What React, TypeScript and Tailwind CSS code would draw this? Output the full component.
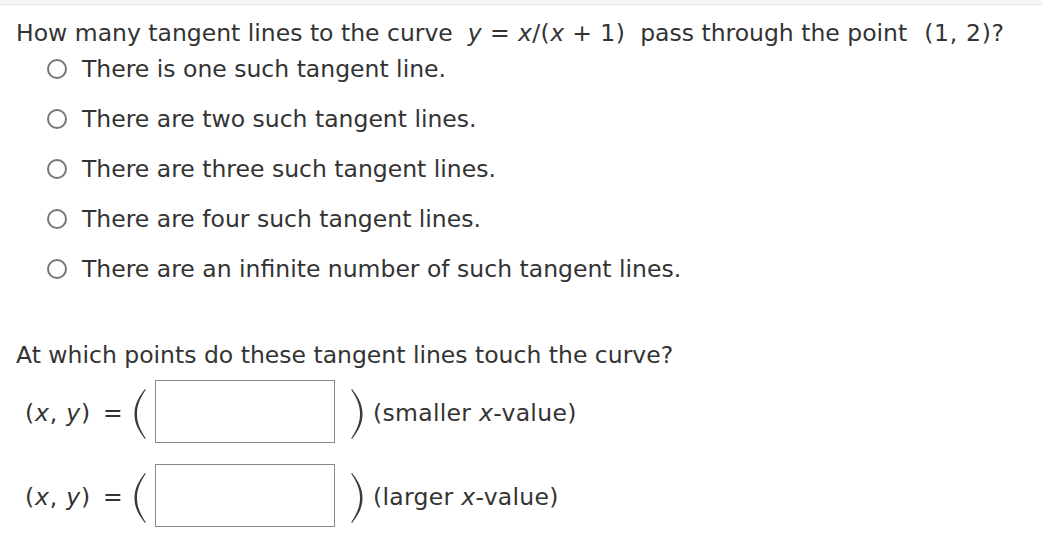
import React from "react";

const Radio = () => (
  <span className="inline-block w-[20px] h-[20px] rounded-full border-2 border-[#767676] bg-white shrink-0" />
);

// tall stretched parenthesis, as drawn by the math renderer
const Paren = ({ right }: { right?: boolean }) => (
  <svg width="12" height="52" viewBox="0 0 12 52" className="shrink-0 mt-[4px]">
    <path
      transform={right ? "translate(12 0) scale(-1 1)" : undefined}
      d="M11 1 C4 10 0.5 17 0.5 26 C0.5 35 4 42 11 51 L11.8 50.4 C5.6 41 3 34 3 26 C3 18 5.6 11 11.8 1.6 Z"
      fill="#3a3a3a"
    />
  </svg>
);

const options = [
  "There is one such tangent line.",
  "There are two such tangent lines.",
  "There are three such tangent lines.",
  "There are four such tangent lines.",
  "There are an infinite number of such tangent lines.",
];

const PointRow = ({ which }: { which: string }) => (
  <div className="flex items-center h-[63px] pl-[25px]">
    <span className="w-[78px] pt-[4px] whitespace-nowrap tracking-[0.8px]">
      (<i>x</i>, <i>y</i>)
    </span>
    <span className="w-[31px] pt-[4px]">=</span>
    <Paren />
    <span className="ml-[9px] w-[180px] h-[63px] border border-[#888] bg-white shrink-0" />
    <span className="ml-[16px] flex">
      <Paren right />
    </span>
    <span className="ml-[10px] pt-[4px] whitespace-nowrap tracking-[0.3px]">
      ({which} <i>x</i>-value)
    </span>
  </div>
);

export default function App() {
  return (
    <div className="w-[1042px] h-[553px] bg-white text-[#333] text-[23.5px] font-['DejaVu_Sans',Verdana,sans-serif] overflow-hidden">
      <div className="h-[5px] bg-[#f6f6f6] border-b border-[#e2e2e2]" />
      <div className="pl-[16px] pt-[14px] leading-[28px] whitespace-nowrap">
        How many tangent lines to the curve&nbsp;{" "}
        <span className="tracking-[0.4px]">
          <i>y</i> = <i>x</i>/(<i>x</i> + 1)
        </span>
        &nbsp; pass through the point&nbsp;{" "}
        <span className="tracking-[0.7px] ml-[2px]">(1, 2)</span>?
      </div>
      <div className="-mt-[3px]">
        {options.map((o) => (
          <div key={o} className="flex items-center h-[50px] pl-[47px] gap-[15px]">
            <Radio />
            <span className="leading-[28px] whitespace-nowrap">{o}</span>
          </div>
        ))}
      </div>
      <div className="pl-[16px] mt-[47px] leading-[28px]">
        At which points do these tangent lines touch the curve?
      </div>
      <div className="mt-[11px] flex flex-col gap-[21px]">
        <PointRow which="smaller" />
        <PointRow which="larger" />
      </div>
    </div>
  );
}
